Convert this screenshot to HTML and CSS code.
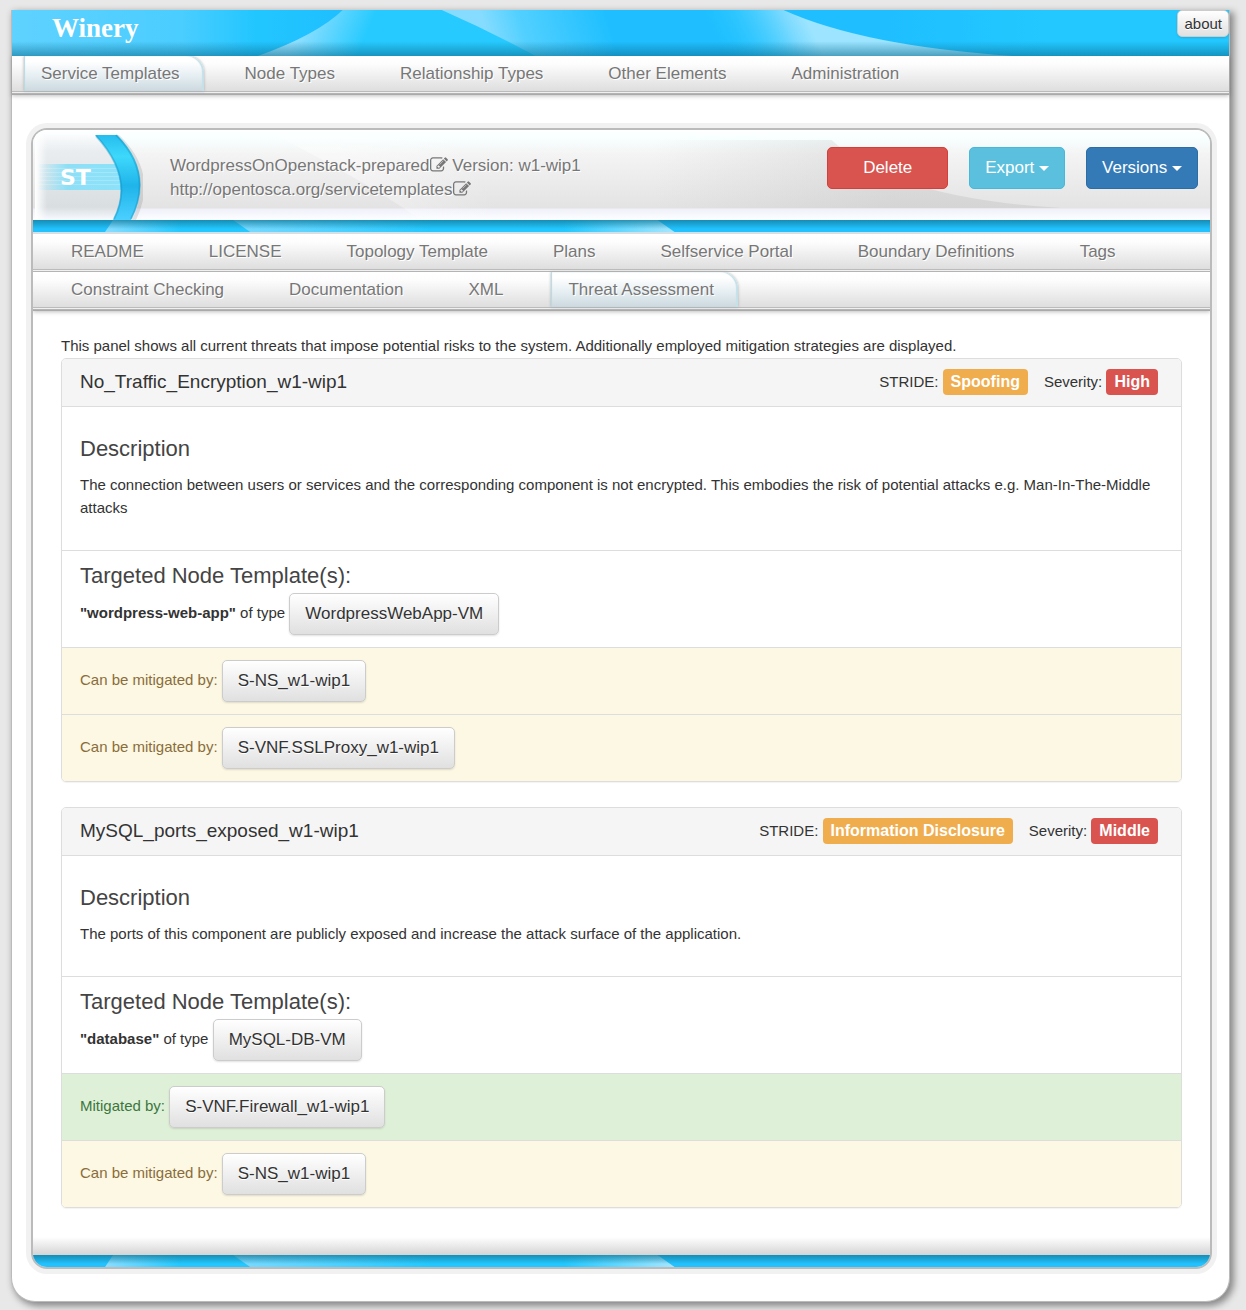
FILE: index.html
```html
<!DOCTYPE html>
<html lang="en">
<head>
<meta charset="utf-8">
<title>Winery</title>
<link rel="stylesheet" href="styles.css">
</head>
<body>
<svg class="defs" aria-hidden="true">
  <defs>
    <symbol id="edit" viewBox="0 0 1792 1792"><path d="M888 1184l116-116-152-152-116 116v56h96v96h56zm440-720q-16-16-33 1l-350 350q-17 17-1 33t33-1l350-350q17-17 1-33zm80 594v190q0 119-84.500 203.500t-203.500 84.500h-832q-119 0-203.500-84.500t-84.500-203.500v-832q0-119 84.500-203.500t203.500-84.500h832q63 0 117 25 15 7 18 23 3 17-9 29l-49 49q-14 14-32 8-23-6-45-6h-832q-66 0-113 47t-47 113v832q0 66 47 113t113 47h832q66 0 113-47t47-113v-126q0-13 9-22l64-64q15-15 35-7t20 29zm-96-738l288 288-672 672h-288v-288zm444 132l-92 92-288-288 92-92q28-28 68-28t68 28l152 152q28 28 28 68t-28 68z"/></symbol>
    <linearGradient id="w0"><stop offset="0" stop-color="#5fd2ff"/><stop offset=".14" stop-color="#4acdff"/><stop offset=".2" stop-color="#22c6ff"/><stop offset=".27" stop-color="#1fbfff"/><stop offset=".72" stop-color="#1fbfff"/><stop offset=".85" stop-color="#22c8ff"/></linearGradient>
    <linearGradient id="w1" gradientUnits="userSpaceOnUse" x1="290" y1="10" x2="350" y2="36"><stop offset="0" stop-color="#94e0ff"/><stop offset="1" stop-color="#26caff"/></linearGradient>
    <linearGradient id="w2" gradientUnits="userSpaceOnUse" x1="475" y1="25" x2="590" y2="-10"><stop offset="0" stop-color="#86dcff"/><stop offset=".3" stop-color="#52d0ff"/><stop offset="1" stop-color="#1fbfff"/></linearGradient>
    <linearGradient id="w3" gradientUnits="userSpaceOnUse" x1="710" y1="40" x2="790" y2="0"><stop offset="0" stop-color="#22c8ff" stop-opacity="0"/><stop offset=".8" stop-color="#7cdaff"/><stop offset="1" stop-color="#9ce4ff"/></linearGradient>
    <linearGradient id="wd" x2="0" y2="1"><stop offset=".68" stop-color="#0a6a8c" stop-opacity="0"/><stop offset="1" stop-color="#0a6a8c" stop-opacity=".55"/></linearGradient>
    <linearGradient id="s1"><stop offset="0" stop-color="#8addff"/><stop offset=".5" stop-color="#22c8ff"/><stop offset="1" stop-color="#22c8ff"/></linearGradient>
    <linearGradient id="s2"><stop offset="0" stop-color="#7cdaff"/><stop offset=".45" stop-color="#22c8ff"/><stop offset=".75" stop-color="#22c8ff"/><stop offset="1" stop-color="#a4e6ff"/></linearGradient>
    <linearGradient id="sd" x2="0" y2="1"><stop offset="0" stop-color="#127a9a" stop-opacity=".75"/><stop offset=".75" stop-color="#127a9a" stop-opacity="0"/></linearGradient>
    <symbol id="ribbon" viewBox="0 0 1176 12" preserveAspectRatio="none">
      <path fill="#22c2ff" d="M0 0h1176v12H0z"/>
      <path fill="url(#s1)" d="M80 0h125l18 12H72z"/>
      <path fill="url(#s2)" d="M200 0h424l17 12H217z"/>
      <path fill="url(#sd)" d="M0 0h1176v12H0z"/>
    </symbol>
    <linearGradient id="e1" gradientUnits="userSpaceOnUse" x1="320" y1="50" x2="430" y2="0"><stop offset="0" stop-color="#fff" stop-opacity=".4"/><stop offset="1" stop-color="#fff" stop-opacity="0"/></linearGradient>
    <linearGradient id="e2" gradientUnits="userSpaceOnUse" x1="620" y1="50" x2="860" y2="50"><stop offset="0" stop-color="#aaa" stop-opacity="0"/><stop offset="1" stop-color="#aaa" stop-opacity=".25"/></linearGradient>
    <linearGradient id="lb" x2="0" y2="1"><stop offset="0" stop-color="#fbfdfe"/><stop offset=".2" stop-color="#e9edef"/><stop offset=".85" stop-color="#d9dee1"/><stop offset="1" stop-color="#f8fbff"/></linearGradient>
    <linearGradient id="lf"><stop offset="0" stop-color="#fff"/><stop offset="1" stop-color="#fff" stop-opacity="0"/></linearGradient>
    <linearGradient id="lt"><stop offset="0" stop-color="#8fe0f8" stop-opacity="0"/><stop offset=".35" stop-color="#8ddff6"/><stop offset="1" stop-color="#8ce2fa"/></linearGradient>
    <linearGradient id="la" x2="0" y2="1"><stop offset="0" stop-color="#25bdee"/><stop offset=".25" stop-color="#3ed8fb"/><stop offset=".6" stop-color="#1fb4ea"/><stop offset="1" stop-color="#4bd0ff"/></linearGradient>
  </defs>
</svg>

<div class="page">
  <header class="banner">
    <svg class="art" viewBox="0 0 1218 46" preserveAspectRatio="none" aria-hidden="true">
      <path fill="url(#w0)" d="M0 0h1218v46H0z"/>
      <path fill="url(#w1)" d="M331 0h99q55 24 94 46H246Q305 25 331 0z"/>
      <path fill="url(#w2)" d="M430 0h200v46H524Q480 22 430 0z"/>
      <path fill="url(#w3)" d="M630 0h142q80 36 230 46H630z"/>
      <path fill="url(#wd)" d="M0 0h1218v46H0z"/>
    </svg>
    <a class="brand" href="#">Winery</a>
    <button class="btn btn-default btn-small" type="button">about</button>
  </header>
  <nav class="tabs tabs-main">
    <a class="tab active" href="#">Service Templates</a>
    <a class="tab" href="#">Node Types</a>
    <a class="tab" href="#">Relationship Types</a>
    <a class="tab" href="#">Other Elements</a>
    <a class="tab" href="#">Administration</a>
  </nav>

  <main class="frame">
    <section class="entity">
      <svg class="art" viewBox="0 0 1176 90" preserveAspectRatio="none" aria-hidden="true">
        <path fill="url(#e1)" d="M240 4h240v84H385Q330 50 240 4z"/>
        <path fill="url(#e2)" d="M620 10h178q60 58 230 68H620z"/>
      </svg>
      <svg class="logo" viewBox="0 0 110 90" role="img" aria-label="ST">
        <path fill="url(#lb)" d="M3 4h60q38 44 20 86H3z"/>
        <path fill="url(#lf)" d="M2 4h12v86H2z"/>
        <path fill="#000" fill-opacity=".1" d="M86 5q40 38 17 85h-4q22-45-15-85z"/>
        <path fill="url(#lt)" d="M5 34h84v26H5z"/>
        <path stroke="#fff" stroke-opacity=".2" d="M5 38.500h84M5 42.500h84M5 46.500h84M5 50.500h84M5 54.500h84"/>
        <path fill="url(#la)" d="M62 5h22q38 38 14 85H80q22-42-18-85z"/>
        <path fill="none" stroke="#0d86b5" stroke-opacity=".35" stroke-width="2" d="M63 6q39 42 18 83M83 5q38 38 15 84"/>
        <text class="logo-text" x="27" y="55">ST</text>
      </svg>
      <div class="entity-info">
        <div>WordpressOnOpenstack-prepared<svg class="icon" aria-hidden="true"><use href="#edit"/></svg> Version: w1-wip1</div>
        <div>http://opentosca.org/servicetemplates<svg class="icon" aria-hidden="true"><use href="#edit"/></svg></div>
      </div>
      <div class="actions">
        <button class="btn btn-danger" type="button">Delete</button>
        <button class="btn btn-info" type="button">Export <span class="caret"></span></button>
        <button class="btn btn-primary" type="button">Versions <span class="caret"></span></button>
      </div>
    </section>
    <svg class="ribbon" aria-hidden="true"><use href="#ribbon"/></svg>
    <nav class="tabs tabs-sub">
      <a class="tab" href="#">README</a>
      <a class="tab" href="#">LICENSE</a>
      <a class="tab" href="#">Topology Template</a>
      <a class="tab" href="#">Plans</a>
      <a class="tab" href="#">Selfservice Portal</a>
      <a class="tab" href="#">Boundary Definitions</a>
      <a class="tab" href="#">Tags</a>
      <a class="tab" href="#">Constraint Checking</a>
      <a class="tab" href="#">Documentation</a>
      <a class="tab" href="#">XML</a>
      <a class="tab active" href="#">Threat Assessment</a>
    </nav>

    <div class="content">
      <p class="intro">This panel shows all current threats that impose potential risks to the system. Additionally employed mitigation strategies are displayed.</p>

      <article class="panel">
        <header class="panel-head">
          <h2>No_Traffic_Encryption_w1-wip1</h2>
          <div class="meta"><span>STRIDE: <b class="label warn">Spoofing</b></span><span>Severity: <b class="label danger">High</b></span></div>
        </header>
        <div class="panel-body">
          <h3>Description</h3>
          <p>The connection between users or services and the corresponding component is not encrypted. This embodies the risk of potential attacks e.g. Man-In-The-Middle attacks</p>
        </div>
        <div class="row">
          <h3>Targeted Node Template(s):</h3>
          <div><b>"wordpress-web-app"</b> of type <button class="btn btn-default" type="button">WordpressWebApp-VM</button></div>
        </div>
        <div class="row open">Can be mitigated by: <button class="btn btn-default" type="button">S-NS_w1-wip1</button></div>
        <div class="row open">Can be mitigated by: <button class="btn btn-default" type="button">S-VNF.SSLProxy_w1-wip1</button></div>
      </article>

      <article class="panel">
        <header class="panel-head">
          <h2>MySQL_ports_exposed_w1-wip1</h2>
          <div class="meta"><span>STRIDE: <b class="label warn">Information Disclosure</b></span><span>Severity: <b class="label danger">Middle</b></span></div>
        </header>
        <div class="panel-body">
          <h3>Description</h3>
          <p>The ports of this component are publicly exposed and increase the attack surface of the application.</p>
        </div>
        <div class="row">
          <h3>Targeted Node Template(s):</h3>
          <div><b>"database"</b> of type <button class="btn btn-default" type="button">MySQL-DB-VM</button></div>
        </div>
        <div class="row done">Mitigated by: <button class="btn btn-default" type="button">S-VNF.Firewall_w1-wip1</button></div>
        <div class="row open">Can be mitigated by: <button class="btn btn-default" type="button">S-NS_w1-wip1</button></div>
      </article>
    </div>
    <div class="shade"></div>
    <svg class="ribbon" aria-hidden="true"><use href="#ribbon"/></svg>
  </main>
</div>
</body>
</html>
```
FILE: styles.css
```css
* { box-sizing: border-box; }

body {
  margin: 0;
  padding: 10px 16px 9px 11px;
  background: #e8e8e8;
  color: #333;
  font: 15px/23px "Liberation Sans", Arial, sans-serif;
}

h2, h3, p { margin: 0; font-weight: 400; }
h2 { font-size: 19px; line-height: 26px; }
h3 { color: #444; font-size: 22px; line-height: 26px; }

.defs { position: absolute; width: 0; height: 0; }

.art {
  position: absolute;
  inset: 0;
  width: 100%;
  height: 100%;
}

.page {
  padding-bottom: 32px;
  border: 1px solid #bbb;
  border-top: 0;
  border-radius: 0 0 24px 24px;
  background: #fff;
  box-shadow: 3px 3px 7px 1px #888;
}

/* Banner */
.banner {
  position: relative;
  display: flex;
  justify-content: space-between;
  align-items: flex-start;
  height: 46px;
}

.brand {
  position: relative;
  padding: 3px 0 0 40px;
  color: #fff;
  font: bold 27px/30px "Liberation Serif", serif;
  text-decoration: none;
}

/* Tab bars */
.tabs {
  display: flex;
  flex-wrap: wrap;
  border-bottom: 1px solid #aaa;
  background: repeating-linear-gradient(#fff 0, #fdfdfd 8px, #dedede 35px, #bbb 35px, #bbb 36px, #f0f0f0 36px, #f0f0f0 37px, #b4b4b4 37px, #b4b4b4 38px);
  box-shadow: 0 1px 4px rgba(0, 0, 0, .25);
}

.tabs-main { padding-left: 12px; }
.tabs-sub { padding-left: 21px; border-top: 2px solid #d5dfe4; }

.tab {
  height: 35px;
  margin: 0 24px 3px 0;
  padding: 0 24px 0 17px;
  color: #777;
  font-size: 17px;
  line-height: 36px;
  text-decoration: none;
  text-shadow: 1px 1px 0 #fff;
}

.tab.active {
  border-radius: 0 16px 0 0;
  background: linear-gradient(#fff 15%, #e4edf1 60%, #ccd9df);
  box-shadow: inset -2px 0 1px #c4e0e8, inset 1px 0 1px #b9d9e3, 0 0 3px #aaa;
}

/* Framed component */
.frame {
  margin: 33px 17px 0 19px;
  overflow: hidden;
  border: 2px solid #bbb;
  border-radius: 16px;
  box-shadow: 0 0 0 5px #f1f1f1;
}

.entity {
  position: relative;
  display: flex;
  height: 90px;
  padding-right: 12px;
  background: linear-gradient(#fff 0, #f8ffff 8px, #f4f4f4 24px, #e3e3e3 78px, #f0f0fa 79px, #fcffff 90px);
}

.logo { position: relative; width: 110px; height: 90px; }

.logo-text {
  fill: #fff;
  font: bold 22px "DejaVu Sans", sans-serif;
}

.entity-info {
  position: relative;
  flex: 1;
  padding: 24px 0 0 27px;
  color: #777;
  font-size: 17px;
  line-height: 24px;
  text-shadow: 1px 1px 0 #fff;
}

.icon {
  width: 18px;
  height: 18px;
  fill: currentColor;
  vertical-align: -3px;
}

.actions {
  position: relative;
  display: flex;
  align-items: flex-start;
  gap: 21px;
  padding-top: 17px;
}

.ribbon {
  display: block;
  width: 100%;
  height: 12px;
}

/* Buttons */
.btn {
  height: 42px;
  padding: 0 15px;
  border: 1px solid;
  border-radius: 5px;
  color: #fff;
  font: 17px/24px "Liberation Sans", Arial, sans-serif;
  vertical-align: middle;
}

.btn-default {
  border-color: #ccc;
  background: linear-gradient(#fff, #e0e0e0);
  color: #333;
  box-shadow: 0 1px 2px rgba(0, 0, 0, .12);
  text-shadow: 0 1px 0 #fff;
}

.btn-small {
  position: relative;
  height: 27px;
  padding: 0 6px;
  font-size: 15px;
}

.btn-danger { min-width: 121px; border-color: #d43f3a; background: #d9534f; }
.btn-info { border-color: #46b8da; background: #5bc0de; }
.btn-primary { border-color: #2e6da4; background: #337ab7; }

.caret {
  display: inline-block;
  border: 5px solid transparent;
  border-top-color: #fff;
  border-bottom: 0;
  vertical-align: middle;
}

/* Threat panels */
.content { padding: 23px 28px 4px; }
.intro { margin-bottom: 1px; }

.panel {
  margin-bottom: 25px;
  overflow: hidden;
  border: 1px solid #ddd;
  border-radius: 5px;
  box-shadow: 0 1px 1px rgba(0, 0, 0, .05);
}

.panel-head {
  display: flex;
  justify-content: space-between;
  padding: 10px 23px 11px 18px;
  border-bottom: 1px solid #ddd;
  background: #f5f5f5;
}

.meta { display: flex; gap: 16px; line-height: 26px; }

.label {
  display: inline-block;
  padding: 0 8px;
  border-radius: 4px;
  color: #fff;
  font-size: 16px;
  line-height: 26px;
}

.warn { background: #f0ad4e; }
.danger { background: #d9534f; }

.panel-body { padding: 29px 18px 31px; }
.panel-body h3 { margin-bottom: 11px; }

.row {
  padding: 12px 18px;
  border-top: 1px solid #ddd;
}

.row h3 { margin-bottom: 4px; }
.open { background: #fcf8e3; color: #8a6d3b; }
.done { background: #dff0d8; color: #3c763d; }

.shade {
  height: 18px;
  background: linear-gradient(#fff, #d4d4d4);
}
```
